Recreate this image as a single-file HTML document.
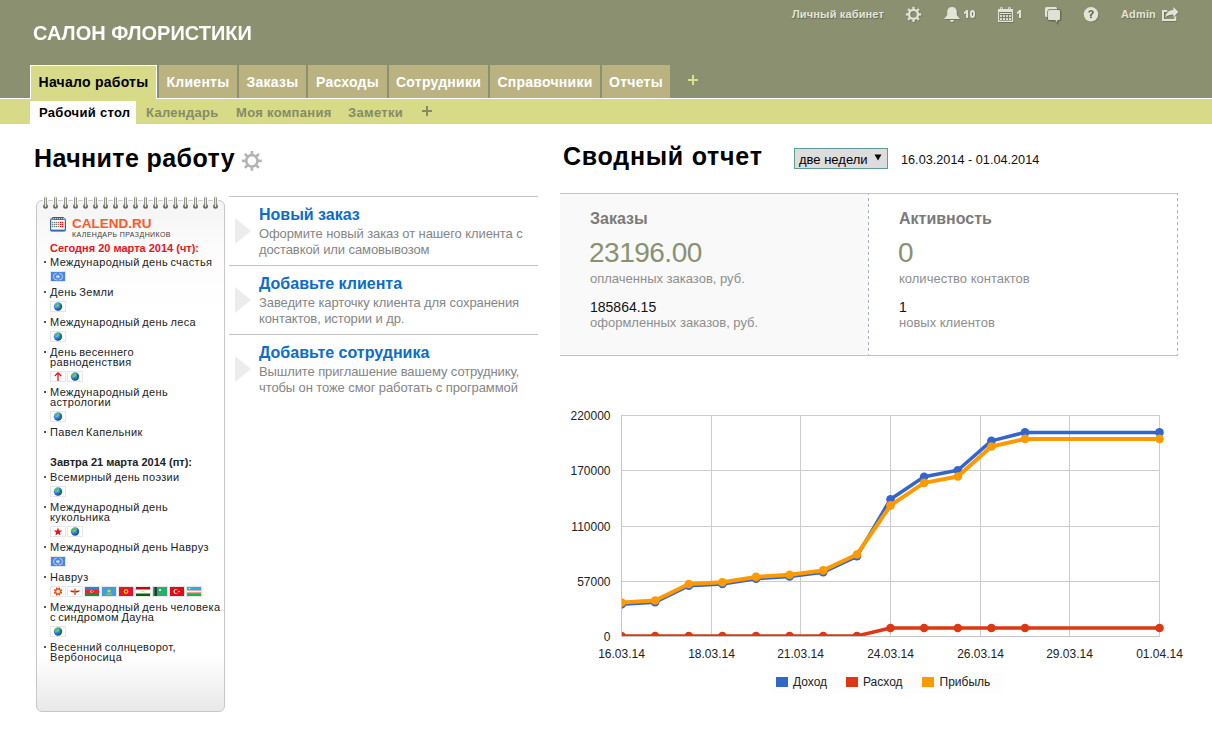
<!DOCTYPE html>
<html><head><meta charset="utf-8">
<style>
*{margin:0;padding:0;box-sizing:border-box}
html,body{width:1212px;height:738px;overflow:hidden;background:#fff;font-family:"Liberation Sans",sans-serif;position:relative}
.a{position:absolute;white-space:nowrap}
#hdr{position:absolute;left:0;top:0;width:1212px;height:99px;background:#8b9170}
#sub{position:absolute;left:0;top:99px;width:1212px;height:25px;background:#d7da87}
.tab{position:absolute;top:65px;height:33px;background:#bab381;color:#fff;font-weight:bold;font-size:14px;letter-spacing:0.25px;line-height:14px}
.tab span{position:absolute;top:10px;left:0;right:0;text-align:center}
.wline{position:absolute;left:0;top:98px;width:1212px;height:1px;background:#fff}
.tb{color:#e4e5d9;font-size:11px;font-weight:bold;line-height:11px;letter-spacing:0.15px;text-shadow:0.7px 0.7px 0.8px rgba(60,65,45,0.5)}
.sn{font-size:13px;font-weight:bold;line-height:13px;color:#858b6a;letter-spacing:0.3px;top:106px}
</style></head><body>
<div id="hdr"></div>
<div class="wline"></div>
<div id="sub"></div>
<div class="a" style="left:33px;top:22px;font-size:21px;line-height:21px;font-weight:bold;color:#fff;transform:scaleX(0.952);transform-origin:0 0">САЛОН ФЛОРИСТИКИ</div>

<!-- top bar -->
<div class="a tb" style="left:792px;top:9px">Личный кабинет</div>
<div class="a tb" style="left:1121px;top:9px">Admin</div>

<!-- tabs -->
<div class="tab" style="left:30px;width:127px;background:#d7da87;border:1px solid #fff;border-bottom:none;height:34px;color:#000"><span style="top:9px">Начало работы</span></div>
<div class="tab" style="left:159px;width:78px"><span>Клиенты</span></div>
<div class="tab" style="left:239px;width:67px"><span>Заказы</span></div>
<div class="tab" style="left:308px;width:79px"><span>Расходы</span></div>
<div class="tab" style="left:389px;width:99px"><span>Сотрудники</span></div>
<div class="tab" style="left:490px;width:110px"><span>Справочники</span></div>
<div class="tab" style="left:602px;width:68px"><span>Отчеты</span></div>
<div class="a" style="left:688px;top:79px;width:10px;height:2px;background:#dde189"></div><div class="a" style="left:692px;top:75px;width:2px;height:10px;background:#dde189"></div>

<!-- subnav -->
<div class="a" style="left:30px;top:101px;width:106px;height:23px;background:#fff"></div>
<div class="a sn" style="left:39px;color:#000">Рабочий стол</div>
<div class="a sn" style="left:146px">Календарь</div>
<div class="a sn" style="left:236px">Моя компания</div>
<div class="a sn" style="left:348px">Заметки</div>
<div class="a" style="left:422px;top:110px;width:10px;height:2px;background:#858b6a"></div><div class="a" style="left:426px;top:106px;width:2px;height:10px;background:#858b6a"></div>

<!-- headings -->
<div class="a" style="left:34px;top:146px;font-size:25px;line-height:25px;font-weight:bold;color:#000;letter-spacing:0.4px">Начните работу</div>
<div class="a" style="left:563px;top:144px;font-size:25px;line-height:25px;font-weight:bold;color:#000;letter-spacing:0.75px">Сводный отчет</div>


<!-- top bar icons -->
<svg class="a" style="left:0;top:0" width="1212" height="30" viewBox="0 0 1212 30">
 <defs>
  <filter id="sh" x="-20%" y="-20%" width="150%" height="150%"><feDropShadow dx="0.7" dy="0.7" stdDeviation="0.4" flood-color="#4a4f38" flood-opacity="0.6"/></filter>
 </defs>
 <g fill="#e3e4d8" filter="url(#sh)">
  <!-- gear -->
  <g ><circle cx="913.5" cy="14.4" r="4.45" fill="none" stroke="#e3e4d8" stroke-width="2.30"/><line x1="918.30" y1="14.40" x2="921.10" y2="14.40" stroke="#e3e4d8" stroke-width="2.2"/><line x1="916.89" y1="17.79" x2="918.87" y2="19.77" stroke="#e3e4d8" stroke-width="2.2"/><line x1="913.50" y1="19.20" x2="913.50" y2="22.00" stroke="#e3e4d8" stroke-width="2.2"/><line x1="910.11" y1="17.79" x2="908.13" y2="19.77" stroke="#e3e4d8" stroke-width="2.2"/><line x1="908.70" y1="14.40" x2="905.90" y2="14.40" stroke="#e3e4d8" stroke-width="2.2"/><line x1="910.11" y1="11.01" x2="908.13" y2="9.03" stroke="#e3e4d8" stroke-width="2.2"/><line x1="913.50" y1="9.60" x2="913.50" y2="6.80" stroke="#e3e4d8" stroke-width="2.2"/><line x1="916.89" y1="11.01" x2="918.87" y2="9.03" stroke="#e3e4d8" stroke-width="2.2"/></g>
  <!-- digits -->
  <path d="M966,10H968.1V18H966V13C965.5,13.5 964.7,13.9 964,14V12.2C965,11.9 965.7,11 966,10Z"/>
  <ellipse cx="972.5" cy="14" rx="1.65" ry="3.05" fill="none" stroke="#e3e4d8" stroke-width="1.9"/>
  <path d="M1019,10H1021.1V18H1019V13C1018.5,13.5 1017.7,13.9 1017,14V12.2C1018,11.9 1018.7,11 1019,10Z"/>
  <!-- bell -->
  <path d="M952,6.9C949.2,6.9 947.3,8.8 947.3,11.5V15L944,18.9H960L956.7,15V11.5C956.7,8.8 954.8,6.9 952,6.9Z"/>
  <path d="M950,20.1H954C953.7,21.4 953,22.1 952,22.1C951,22.1 950.3,21.4 950,20.1Z"/>
  <!-- calendar -->
  <path fill-rule="evenodd" d="M998,9h15.1v12.9h-15.1z M999.1,12h12.8v8.8h-12.8z"/>
  <path fill-rule="evenodd" d="M1000.2,10v-1.8a1.3,1.3 0 0 1 2.6,0v1.8z M1001.1,9.6v-1.3a0.4,0.4 0 0 1 0.8,0v1.3z"/>
  <path fill-rule="evenodd" d="M1008.2,10v-1.8a1.3,1.3 0 0 1 2.6,0v1.8z M1009.1,9.6v-1.3a0.4,0.4 0 0 1 0.8,0v1.3z"/>
  <rect x="1000" y="13" width="11" height="1"/>
  <rect x="1000" y="15.1" width="2" height="1.8"/><rect x="1003" y="15.1" width="2" height="1.8"/><rect x="1006" y="15.1" width="2" height="1.8"/><rect x="1009" y="15.1" width="2" height="1.8"/>
  <rect x="1000" y="18.1" width="2" height="1.9"/><rect x="1003" y="18.1" width="2" height="1.9"/><rect x="1006" y="18.1" width="2" height="1.9"/><rect x="1009" y="18.1" width="2" height="1.9"/>
  <!-- chat -->
  <rect x="1045" y="7" width="12" height="10" rx="1.6"/>
  <path d="M1049.6,10h8.8c0.9,0 1.6,0.7 1.6,1.6v6.8c0,0.9 -0.7,1.6 -1.6,1.6h-1.2l0.1,2.7l-2,-2.7h-5.7c-0.9,0 -1.6,-0.7 -1.6,-1.6v-6.8c0,-0.9 0.7,-1.6 1.6,-1.6z" fill="#dfe1d6" stroke="#666c4e" stroke-width="1.3" paint-order="stroke"/>
  <!-- help -->
  <circle cx="1091" cy="14.3" r="7.2"/>
  <!-- share -->
  <path d="M1162,10H1167.2V12H1164V19H1174.2V17.4L1176.2,15.6V21H1162Z"/>
  <path d="M1173.4,6.9L1178.3,12.1L1173.4,17.2V14.4C1169.8,14.3 1167.6,15 1165.4,17.4C1166,13.2 1168.6,10.3 1173.4,10Z"/>
 </g>
 <g fill="#666c4e"><path d="M1088.3,12.5c0,-1.7 1.1,-2.6 2.7,-2.6c1.7,0 2.8,1 2.8,2.3c0,2 -2.2,2 -2.2,3.8h-1.8c0,-2.5 2.1,-2.4 2.1,-3.6c0,-0.6 -0.4,-1 -1,-1c-0.6,0 -1,0.4 -1,1.1z"/><rect x="1090" y="16.4" width="1.8" height="1.7"/></g>
</svg>

<!-- calendar widget -->
<div class="a" style="left:36px;top:200px;width:189px;height:512px;border:1px solid #c8c8c8;border-radius:6px;background:linear-gradient(#f4f4f4 0px,#fcfcfc 50px,#fff 110px,#fff 455px,#e8e8e8 511px)"></div>
<svg class="a" style="left:36px;top:194px" width="189" height="18">
 <defs>
  <linearGradient id="ring" x1="0" x2="1"><stop offset="0" stop-color="#6a6a62"/><stop offset="0.5" stop-color="#d8d8cc"/><stop offset="1" stop-color="#6a6a62"/></linearGradient>
 </defs>
 <g id="rings"><g transform="translate(9.5,0)"><rect x="-2.7" y="5.6" width="5.4" height="1.8" fill="#fcfcfc"/><ellipse cx="0" cy="12.4" rx="2.5" ry="2.3" fill="#666660"/><path d="M-1.4,4 L0,2 L1.4,4 V12.5 H-1.4z" fill="url(#ring)"/><rect x="-0.5" y="3.5" width="1" height="9.5" fill="#e4e4d8"/></g><g transform="translate(19.5,0)"><rect x="-2.7" y="5.6" width="5.4" height="1.8" fill="#fcfcfc"/><ellipse cx="0" cy="12.4" rx="2.5" ry="2.3" fill="#666660"/><path d="M-1.4,4 L0,2 L1.4,4 V12.5 H-1.4z" fill="url(#ring)"/><rect x="-0.5" y="3.5" width="1" height="9.5" fill="#e4e4d8"/></g><g transform="translate(29.5,0)"><rect x="-2.7" y="5.6" width="5.4" height="1.8" fill="#fcfcfc"/><ellipse cx="0" cy="12.4" rx="2.5" ry="2.3" fill="#666660"/><path d="M-1.4,4 L0,2 L1.4,4 V12.5 H-1.4z" fill="url(#ring)"/><rect x="-0.5" y="3.5" width="1" height="9.5" fill="#e4e4d8"/></g><g transform="translate(39.5,0)"><rect x="-2.7" y="5.6" width="5.4" height="1.8" fill="#fcfcfc"/><ellipse cx="0" cy="12.4" rx="2.5" ry="2.3" fill="#666660"/><path d="M-1.4,4 L0,2 L1.4,4 V12.5 H-1.4z" fill="url(#ring)"/><rect x="-0.5" y="3.5" width="1" height="9.5" fill="#e4e4d8"/></g><g transform="translate(49.5,0)"><rect x="-2.7" y="5.6" width="5.4" height="1.8" fill="#fcfcfc"/><ellipse cx="0" cy="12.4" rx="2.5" ry="2.3" fill="#666660"/><path d="M-1.4,4 L0,2 L1.4,4 V12.5 H-1.4z" fill="url(#ring)"/><rect x="-0.5" y="3.5" width="1" height="9.5" fill="#e4e4d8"/></g><g transform="translate(59.5,0)"><rect x="-2.7" y="5.6" width="5.4" height="1.8" fill="#fcfcfc"/><ellipse cx="0" cy="12.4" rx="2.5" ry="2.3" fill="#666660"/><path d="M-1.4,4 L0,2 L1.4,4 V12.5 H-1.4z" fill="url(#ring)"/><rect x="-0.5" y="3.5" width="1" height="9.5" fill="#e4e4d8"/></g><g transform="translate(69.5,0)"><rect x="-2.7" y="5.6" width="5.4" height="1.8" fill="#fcfcfc"/><ellipse cx="0" cy="12.4" rx="2.5" ry="2.3" fill="#666660"/><path d="M-1.4,4 L0,2 L1.4,4 V12.5 H-1.4z" fill="url(#ring)"/><rect x="-0.5" y="3.5" width="1" height="9.5" fill="#e4e4d8"/></g><g transform="translate(79.5,0)"><rect x="-2.7" y="5.6" width="5.4" height="1.8" fill="#fcfcfc"/><ellipse cx="0" cy="12.4" rx="2.5" ry="2.3" fill="#666660"/><path d="M-1.4,4 L0,2 L1.4,4 V12.5 H-1.4z" fill="url(#ring)"/><rect x="-0.5" y="3.5" width="1" height="9.5" fill="#e4e4d8"/></g><g transform="translate(89.5,0)"><rect x="-2.7" y="5.6" width="5.4" height="1.8" fill="#fcfcfc"/><ellipse cx="0" cy="12.4" rx="2.5" ry="2.3" fill="#666660"/><path d="M-1.4,4 L0,2 L1.4,4 V12.5 H-1.4z" fill="url(#ring)"/><rect x="-0.5" y="3.5" width="1" height="9.5" fill="#e4e4d8"/></g><g transform="translate(99.5,0)"><rect x="-2.7" y="5.6" width="5.4" height="1.8" fill="#fcfcfc"/><ellipse cx="0" cy="12.4" rx="2.5" ry="2.3" fill="#666660"/><path d="M-1.4,4 L0,2 L1.4,4 V12.5 H-1.4z" fill="url(#ring)"/><rect x="-0.5" y="3.5" width="1" height="9.5" fill="#e4e4d8"/></g><g transform="translate(109.5,0)"><rect x="-2.7" y="5.6" width="5.4" height="1.8" fill="#fcfcfc"/><ellipse cx="0" cy="12.4" rx="2.5" ry="2.3" fill="#666660"/><path d="M-1.4,4 L0,2 L1.4,4 V12.5 H-1.4z" fill="url(#ring)"/><rect x="-0.5" y="3.5" width="1" height="9.5" fill="#e4e4d8"/></g><g transform="translate(119.5,0)"><rect x="-2.7" y="5.6" width="5.4" height="1.8" fill="#fcfcfc"/><ellipse cx="0" cy="12.4" rx="2.5" ry="2.3" fill="#666660"/><path d="M-1.4,4 L0,2 L1.4,4 V12.5 H-1.4z" fill="url(#ring)"/><rect x="-0.5" y="3.5" width="1" height="9.5" fill="#e4e4d8"/></g><g transform="translate(129.5,0)"><rect x="-2.7" y="5.6" width="5.4" height="1.8" fill="#fcfcfc"/><ellipse cx="0" cy="12.4" rx="2.5" ry="2.3" fill="#666660"/><path d="M-1.4,4 L0,2 L1.4,4 V12.5 H-1.4z" fill="url(#ring)"/><rect x="-0.5" y="3.5" width="1" height="9.5" fill="#e4e4d8"/></g><g transform="translate(139.5,0)"><rect x="-2.7" y="5.6" width="5.4" height="1.8" fill="#fcfcfc"/><ellipse cx="0" cy="12.4" rx="2.5" ry="2.3" fill="#666660"/><path d="M-1.4,4 L0,2 L1.4,4 V12.5 H-1.4z" fill="url(#ring)"/><rect x="-0.5" y="3.5" width="1" height="9.5" fill="#e4e4d8"/></g><g transform="translate(149.5,0)"><rect x="-2.7" y="5.6" width="5.4" height="1.8" fill="#fcfcfc"/><ellipse cx="0" cy="12.4" rx="2.5" ry="2.3" fill="#666660"/><path d="M-1.4,4 L0,2 L1.4,4 V12.5 H-1.4z" fill="url(#ring)"/><rect x="-0.5" y="3.5" width="1" height="9.5" fill="#e4e4d8"/></g><g transform="translate(159.5,0)"><rect x="-2.7" y="5.6" width="5.4" height="1.8" fill="#fcfcfc"/><ellipse cx="0" cy="12.4" rx="2.5" ry="2.3" fill="#666660"/><path d="M-1.4,4 L0,2 L1.4,4 V12.5 H-1.4z" fill="url(#ring)"/><rect x="-0.5" y="3.5" width="1" height="9.5" fill="#e4e4d8"/></g><g transform="translate(169.5,0)"><rect x="-2.7" y="5.6" width="5.4" height="1.8" fill="#fcfcfc"/><ellipse cx="0" cy="12.4" rx="2.5" ry="2.3" fill="#666660"/><path d="M-1.4,4 L0,2 L1.4,4 V12.5 H-1.4z" fill="url(#ring)"/><rect x="-0.5" y="3.5" width="1" height="9.5" fill="#e4e4d8"/></g><g transform="translate(179.5,0)"><rect x="-2.7" y="5.6" width="5.4" height="1.8" fill="#fcfcfc"/><ellipse cx="0" cy="12.4" rx="2.5" ry="2.3" fill="#666660"/><path d="M-1.4,4 L0,2 L1.4,4 V12.5 H-1.4z" fill="url(#ring)"/><rect x="-0.5" y="3.5" width="1" height="9.5" fill="#e4e4d8"/></g></g>
</svg>

<style>
#cal{position:absolute;left:44px;top:243px;width:180px;font-size:11px;color:#222}
#cal .hd{font-weight:bold;height:14px;line-height:11px;padding-left:6px;letter-spacing:0}
#cal .ci{position:relative;padding-left:6px;padding-bottom:5px}
#cal .ci:before{content:"";position:absolute;left:0;top:4px;width:2px;height:2px;background:#555}
#cal .ct{line-height:10px;letter-spacing:0.35px;word-spacing:-1px}
#cal .icr{height:11px;margin-top:4px;font-size:0;line-height:0}
#cal .ib{display:inline-block;width:16px;height:11px;border:1px solid #e6e6e6;margin-right:1px;background:#fff}
#cal .ib svg{display:block}
</style>
<svg class="a" style="left:50px;top:217px" width="17" height="15" viewBox="0 0 17 15">
 <rect x="0.6" y="1.6" width="14.8" height="12.4" rx="1.6" fill="#fff" stroke="#3668a8" stroke-width="1.2"/>
 <rect x="1" y="12.6" width="14" height="1.6" fill="#3668a8"/>
 <rect x="2.2" y="0" width="11.6" height="2.9" fill="#4d5676"/>
 <rect x="2.8" y="1.1" width="1" height="1" fill="#e8eef8"/><rect x="4.8" y="1.1" width="1" height="1" fill="#e8eef8"/><rect x="6.8" y="1.1" width="1" height="1" fill="#e8eef8"/><rect x="8.8" y="1.1" width="1" height="1" fill="#e8eef8"/><rect x="10.8" y="1.1" width="1" height="1" fill="#e8eef8"/><rect x="12.8" y="1.1" width="1" height="1" fill="#e8eef8"/><rect x="1.8" y="4.800000000000001" width="1.4" height="1.3" fill="#7a7a7a"/><rect x="3.8" y="4.800000000000001" width="1.4" height="1.3" fill="#7a7a7a"/><rect x="5.7" y="4.800000000000001" width="1.4" height="1.3" fill="#7a7a7a"/><rect x="7.7" y="4.800000000000001" width="1.4" height="1.3" fill="#7a7a7a"/><rect x="9.8" y="4.800000000000001" width="1.4" height="1.3" fill="#ff0000"/><rect x="11.700000000000001" y="4.800000000000001" width="1.4" height="1.3" fill="#ff0000"/><rect x="1.8" y="6.800000000000001" width="1.4" height="1.3" fill="#7a7a7a"/><rect x="3.8" y="6.800000000000001" width="1.4" height="1.3" fill="#7a7a7a"/><rect x="5.7" y="6.800000000000001" width="1.4" height="1.3" fill="#7a7a7a"/><rect x="7.7" y="6.800000000000001" width="1.4" height="1.3" fill="#7a7a7a"/><rect x="9.8" y="6.800000000000001" width="1.4" height="1.3" fill="#ff0000"/><rect x="11.700000000000001" y="6.800000000000001" width="1.4" height="1.3" fill="#ff0000"/><rect x="1.8" y="8.9" width="1.4" height="1.3" fill="#7a7a7a"/><rect x="3.8" y="8.9" width="1.4" height="1.3" fill="#7a7a7a"/><rect x="5.7" y="8.9" width="1.4" height="1.3" fill="#7a7a7a"/><rect x="7.7" y="8.9" width="1.4" height="1.3" fill="#7a7a7a"/><rect x="9.8" y="8.9" width="1.4" height="1.3" fill="#ff0000"/><rect x="11.700000000000001" y="8.9" width="1.4" height="1.3" fill="#ff0000"/>
</svg>
<div class="a" style="left:72px;top:217px;font-size:13.5px;line-height:13px;font-weight:bold;color:#ff5a1f">CALEND.RU</div>
<div class="a" style="left:72px;top:231px;font-size:7px;line-height:7px;color:#3a3a3a;letter-spacing:0.4px">КАЛЕНДАРЬ ПРАЗДНИКОВ</div>
<div id="cal">
<div class="hd" style="color:#e8141c">Сегодня 20 марта 2014 (чт):</div>
<div class="ci"><div class="ct">Международный день счастья</div><div class="icr"><span class="ib un"><svg width="14" height="9"><rect width="14" height="9" fill="#4a86e0"/><path d="M5.6,1.2 A3.4,3.4 0 0 0 6.2,8 M8.4,1.2 A3.4,3.4 0 0 1 7.8,8" fill="none" stroke="#c8dcf8" stroke-width="0.9"/><circle cx="7" cy="4.6" r="1.9" fill="#9cc0f0"/><path d="M6.4,5.2 L7.8,3.4 L7.8,5.6z" fill="#fff"/><circle cx="5.6" cy="4.2" r="0.5" fill="#fff"/></svg></span></div></div><div class="ci"><div class="ct">День Земли</div><div class="icr"><span class="ib"><svg width="14" height="9"><defs><radialGradient id="gl" cx="0.35" cy="0.3" r="0.8"><stop offset="0" stop-color="#a8e0ff"/><stop offset="0.45" stop-color="#3a8ae8"/><stop offset="1" stop-color="#10308a"/></radialGradient></defs><circle cx="7" cy="4.5" r="4.2" fill="url(#gl)"/><path d="M3.6,3.2 Q4.5,1 7,0.8 Q7.6,2 6.6,3.2 Q5.8,4.2 4.2,4.4z" fill="#5cc020"/><path d="M9.2,2 Q11,3 11.1,5 Q10.5,6.5 9.2,6.6 Q8.6,4.8 9.2,2z" fill="#0a8a2a"/><path d="M6.2,5.6 Q7.2,5.4 7.4,6.8 Q6.8,7.6 6.2,7z" fill="#108a30"/></svg></span></div></div><div class="ci"><div class="ct">Международный день леса</div><div class="icr"><span class="ib"><svg width="14" height="9"><defs><radialGradient id="gl" cx="0.35" cy="0.3" r="0.8"><stop offset="0" stop-color="#a8e0ff"/><stop offset="0.45" stop-color="#3a8ae8"/><stop offset="1" stop-color="#10308a"/></radialGradient></defs><circle cx="7" cy="4.5" r="4.2" fill="url(#gl)"/><path d="M3.6,3.2 Q4.5,1 7,0.8 Q7.6,2 6.6,3.2 Q5.8,4.2 4.2,4.4z" fill="#5cc020"/><path d="M9.2,2 Q11,3 11.1,5 Q10.5,6.5 9.2,6.6 Q8.6,4.8 9.2,2z" fill="#0a8a2a"/><path d="M6.2,5.6 Q7.2,5.4 7.4,6.8 Q6.8,7.6 6.2,7z" fill="#108a30"/></svg></span></div></div><div class="ci"><div class="ct">День весеннего<br>равноденствия</div><div class="icr"><span class="ib"><svg width="14" height="9"><path d="M7,0.5 v8.5 M3.8,4 L7,0.8 L10.2,4" stroke="#e8141c" stroke-width="1.3" fill="none"/></svg></span><span class="ib"><svg width="14" height="9"><defs><radialGradient id="gl" cx="0.35" cy="0.3" r="0.8"><stop offset="0" stop-color="#a8e0ff"/><stop offset="0.45" stop-color="#3a8ae8"/><stop offset="1" stop-color="#10308a"/></radialGradient></defs><circle cx="7" cy="4.5" r="4.2" fill="url(#gl)"/><path d="M3.6,3.2 Q4.5,1 7,0.8 Q7.6,2 6.6,3.2 Q5.8,4.2 4.2,4.4z" fill="#5cc020"/><path d="M9.2,2 Q11,3 11.1,5 Q10.5,6.5 9.2,6.6 Q8.6,4.8 9.2,2z" fill="#0a8a2a"/><path d="M6.2,5.6 Q7.2,5.4 7.4,6.8 Q6.8,7.6 6.2,7z" fill="#108a30"/></svg></span></div></div><div class="ci"><div class="ct">Международный день<br>астрологии</div><div class="icr"><span class="ib"><svg width="14" height="9"><defs><radialGradient id="gl" cx="0.35" cy="0.3" r="0.8"><stop offset="0" stop-color="#a8e0ff"/><stop offset="0.45" stop-color="#3a8ae8"/><stop offset="1" stop-color="#10308a"/></radialGradient></defs><circle cx="7" cy="4.5" r="4.2" fill="url(#gl)"/><path d="M3.6,3.2 Q4.5,1 7,0.8 Q7.6,2 6.6,3.2 Q5.8,4.2 4.2,4.4z" fill="#5cc020"/><path d="M9.2,2 Q11,3 11.1,5 Q10.5,6.5 9.2,6.6 Q8.6,4.8 9.2,2z" fill="#0a8a2a"/><path d="M6.2,5.6 Q7.2,5.4 7.4,6.8 Q6.8,7.6 6.2,7z" fill="#108a30"/></svg></span></div></div><div class="ci"><div class="ct">Павел Капельник</div></div>
<div style="height:15px"></div>
<div class="hd" style="height:15px">Завтра 21 марта 2014 (пт):</div>
<div class="ci"><div class="ct">Всемирный день поэзии</div><div class="icr"><span class="ib"><svg width="14" height="9"><defs><radialGradient id="gl" cx="0.35" cy="0.3" r="0.8"><stop offset="0" stop-color="#a8e0ff"/><stop offset="0.45" stop-color="#3a8ae8"/><stop offset="1" stop-color="#10308a"/></radialGradient></defs><circle cx="7" cy="4.5" r="4.2" fill="url(#gl)"/><path d="M3.6,3.2 Q4.5,1 7,0.8 Q7.6,2 6.6,3.2 Q5.8,4.2 4.2,4.4z" fill="#5cc020"/><path d="M9.2,2 Q11,3 11.1,5 Q10.5,6.5 9.2,6.6 Q8.6,4.8 9.2,2z" fill="#0a8a2a"/><path d="M6.2,5.6 Q7.2,5.4 7.4,6.8 Q6.8,7.6 6.2,7z" fill="#108a30"/></svg></span></div></div><div class="ci"><div class="ct">Международный день<br>кукольника</div><div class="icr"><span class="ib"><svg width="14" height="9"><path d="M7,0.5 L8.1,3.4 L11.2,3.5 L8.8,5.4 L9.6,8.5 L7,6.8 L4.4,8.5 L5.2,5.4 L2.8,3.5 L5.9,3.4z" fill="#e8141c"/></svg></span><span class="ib"><svg width="14" height="9"><defs><radialGradient id="gl" cx="0.35" cy="0.3" r="0.8"><stop offset="0" stop-color="#a8e0ff"/><stop offset="0.45" stop-color="#3a8ae8"/><stop offset="1" stop-color="#10308a"/></radialGradient></defs><circle cx="7" cy="4.5" r="4.2" fill="url(#gl)"/><path d="M3.6,3.2 Q4.5,1 7,0.8 Q7.6,2 6.6,3.2 Q5.8,4.2 4.2,4.4z" fill="#5cc020"/><path d="M9.2,2 Q11,3 11.1,5 Q10.5,6.5 9.2,6.6 Q8.6,4.8 9.2,2z" fill="#0a8a2a"/><path d="M6.2,5.6 Q7.2,5.4 7.4,6.8 Q6.8,7.6 6.2,7z" fill="#108a30"/></svg></span></div></div><div class="ci"><div class="ct">Международный день Навруз</div><div class="icr"><span class="ib un"><svg width="14" height="9"><rect width="14" height="9" fill="#4a86e0"/><path d="M5.6,1.2 A3.4,3.4 0 0 0 6.2,8 M8.4,1.2 A3.4,3.4 0 0 1 7.8,8" fill="none" stroke="#c8dcf8" stroke-width="0.9"/><circle cx="7" cy="4.6" r="1.9" fill="#9cc0f0"/><path d="M6.4,5.2 L7.8,3.4 L7.8,5.6z" fill="#fff"/><circle cx="5.6" cy="4.2" r="0.5" fill="#fff"/></svg></span></div></div><div class="ci"><div class="ct">Навруз</div><div class="icr"><span class="ib"><svg width="14" height="9"><rect width="14" height="9" fill="#fff"/><circle cx="10.05" cy="5.76" r="0.9" fill="#e8200c"/><circle cx="8.26" cy="7.55" r="0.9" fill="#e8200c"/><circle cx="5.74" cy="7.55" r="0.9" fill="#e8200c"/><circle cx="3.95" cy="5.76" r="0.9" fill="#e8200c"/><circle cx="3.95" cy="3.24" r="0.9" fill="#e8200c"/><circle cx="5.74" cy="1.45" r="0.9" fill="#e8200c"/><circle cx="8.26" cy="1.45" r="0.9" fill="#e8200c"/><circle cx="10.05" cy="3.24" r="0.9" fill="#e8200c"/><circle cx="7" cy="4.5" r="2.4" fill="none" stroke="#ff5a10" stroke-width="1.3"/></svg></span><span class="ib"><svg width="14" height="9"><rect width="14" height="9" fill="#fff"/><path d="M1.5,3.8 Q4,3.2 7,4 Q10,3.2 12.5,3.8 Q11,5.6 7,5.2 Q3,5.6 1.5,3.8z" fill="#d22"/><path d="M3,4.6 Q7,5.8 11,4.6" stroke="#333" stroke-width="0.6" fill="none"/><path d="M6.2,2 h1.6 v6 h-1.6z" fill="#f06020"/><rect x="6.3" y="1.2" width="1.4" height="1.2" fill="#f8c020"/></svg></span><span class="ib"><svg width="14" height="9"><rect width="14" height="3" fill="#2e7fcc"/><rect y="3" width="14" height="3" fill="#e8262e"/><rect y="6" width="14" height="3" fill="#1e8a3a"/><circle cx="6.6" cy="4.5" r="1.3" fill="#fff"/><circle cx="7.1" cy="4.5" r="1" fill="#e8262e"/><circle cx="8.6" cy="4.5" r="0.5" fill="#fff"/></svg></span><span class="ib"><svg width="14" height="9"><rect width="14" height="9" fill="#3aa0e0"/><circle cx="7" cy="4" r="1.6" fill="#fcd116"/><path d="M4,6.8 q3,1.2 6,0" stroke="#fcd116" stroke-width="0.7" fill="none"/></svg></span><span class="ib"><svg width="14" height="9"><rect width="14" height="9" fill="#e8112d"/><circle cx="7" cy="4.5" r="2.3" fill="#ffef00"/><circle cx="7" cy="4.5" r="1.2" fill="#e8112d"/></svg></span><span class="ib"><svg width="14" height="9"><rect width="14" height="9" fill="#fff"/><rect width="14" height="2.5" fill="#c00"/><rect y="6.5" width="14" height="2.5" fill="#060"/><path d="M5.5,4.8 q1.5,-1.2 3,0" stroke="#f8c300" stroke-width="0.7" fill="none"/></svg></span><span class="ib"><svg width="14" height="9"><rect width="14" height="9" fill="#28ae66"/><rect x="1.5" width="2.5" height="9" fill="#333"/><circle cx="7" cy="3" r="1" fill="#fff"/></svg></span><span class="ib"><svg width="14" height="9"><rect width="14" height="9" fill="#e30a17"/><circle cx="5.8" cy="4.5" r="2.3" fill="#fff"/><circle cx="6.4" cy="4.5" r="1.8" fill="#e30a17"/><circle cx="9" cy="4.5" r="0.8" fill="#fff"/></svg></span><span class="ib"><svg width="14" height="9"><rect width="14" height="3" fill="#1eb3e0"/><rect y="3" width="14" height="0.6" fill="#ce1126"/><rect y="3.6" width="14" height="2" fill="#fff"/><rect y="5.6" width="14" height="0.6" fill="#ce1126"/><rect y="6.2" width="14" height="2.8" fill="#1eb53a"/><circle cx="2.5" cy="1.5" r="0.8" fill="#fff"/></svg></span></div></div><div class="ci"><div class="ct">Международный день человека<br>с синдромом Дауна</div><div class="icr"><span class="ib"><svg width="14" height="9"><defs><radialGradient id="gl" cx="0.35" cy="0.3" r="0.8"><stop offset="0" stop-color="#a8e0ff"/><stop offset="0.45" stop-color="#3a8ae8"/><stop offset="1" stop-color="#10308a"/></radialGradient></defs><circle cx="7" cy="4.5" r="4.2" fill="url(#gl)"/><path d="M3.6,3.2 Q4.5,1 7,0.8 Q7.6,2 6.6,3.2 Q5.8,4.2 4.2,4.4z" fill="#5cc020"/><path d="M9.2,2 Q11,3 11.1,5 Q10.5,6.5 9.2,6.6 Q8.6,4.8 9.2,2z" fill="#0a8a2a"/><path d="M6.2,5.6 Q7.2,5.4 7.4,6.8 Q6.8,7.6 6.2,7z" fill="#108a30"/></svg></span></div></div><div class="ci"><div class="ct">Весенний солнцеворот,<br>Вербоносица</div></div>
</div>

<style>
.mi{position:absolute;left:229px;width:309px;height:69px;border-top:1px solid #c3c3c3}
.mi .tri{position:absolute;left:6px;top:21px;width:0;height:0;border-left:16px solid #ececec;border-top:13px solid transparent;border-bottom:13px solid transparent}
.mi .t{position:absolute;left:30px;top:10px;font-size:16px;line-height:16px;font-weight:bold;color:#0b6ccb;white-space:nowrap}
.mi .d{position:absolute;left:30px;top:29px;font-size:13px;line-height:16px;color:#858585;white-space:nowrap;letter-spacing:-0.1px}
</style>
<div class="mi" style="top:196px"><div class="tri"></div><div class="t">Новый заказ</div><div class="d">Оформите новый заказ от нашего клиента с<br>доставкой или самовывозом</div></div>
<div class="mi" style="top:265px"><div class="tri"></div><div class="t">Добавьте клиента</div><div class="d">Заведите карточку клиента для сохранения<br>контактов, истории и др.</div></div>
<div class="mi" style="top:334px;height:1px"></div>
<div class="mi" style="top:334px;border-top:1px solid #c3c3c3"><div class="tri"></div><div class="t">Добавьте сотрудника</div><div class="d">Вышлите приглашение вашему сотруднику,<br>чтобы он тоже смог работать с программой</div></div>
<svg class="a" style="left:238px;top:147px" width="28" height="28" viewBox="238 147 28 28"><g ><circle cx="251.85" cy="160.85" r="5.65" fill="none" stroke="#b4b4b4" stroke-width="2.70"/><line x1="258.05" y1="160.85" x2="261.75" y2="160.85" stroke="#b4b4b4" stroke-width="2.6"/><line x1="256.23" y1="165.23" x2="258.85" y2="167.85" stroke="#b4b4b4" stroke-width="2.6"/><line x1="251.85" y1="167.05" x2="251.85" y2="170.75" stroke="#b4b4b4" stroke-width="2.6"/><line x1="247.47" y1="165.23" x2="244.85" y2="167.85" stroke="#b4b4b4" stroke-width="2.6"/><line x1="245.65" y1="160.85" x2="241.95" y2="160.85" stroke="#b4b4b4" stroke-width="2.6"/><line x1="247.47" y1="156.47" x2="244.85" y2="153.85" stroke="#b4b4b4" stroke-width="2.6"/><line x1="251.85" y1="154.65" x2="251.85" y2="150.95" stroke="#b4b4b4" stroke-width="2.6"/><line x1="256.23" y1="156.47" x2="258.85" y2="153.85" stroke="#b4b4b4" stroke-width="2.6"/></g></svg>

<div class="a" style="left:794px;top:148px;width:94px;height:21px;border:1px solid #5f9b9b;background:#dddddd"></div>
<div class="a" style="left:799px;top:153px;font-size:13px;line-height:13px;color:#000">две недели</div>
<svg class="a" style="left:874px;top:154px" width="8" height="7"><path d="M0.5,0.5h7l-3.5,6z" fill="#000"/></svg>
<div class="a" style="left:901px;top:154px;font-size:12.7px;line-height:13px;color:#111">16.03.2014 - 01.04.2014</div>

<div class="a" style="left:560px;top:193px;width:618px;height:163px;border-top:1px solid #c4c4c4;border-bottom:1px solid #c2c2c2"></div>
<div class="a" style="left:560px;top:194px;width:308px;height:160px;background:#f9f9f9"></div>
<svg class="a" style="left:0;top:0" width="1212" height="360"><g stroke="#a6b2be" stroke-width="1" stroke-dasharray="3 3" stroke-dashoffset="2"><line x1="868.5" y1="194" x2="868.5" y2="355"/><line x1="1177.5" y1="194" x2="1177.5" y2="355"/></g></svg>
<style>
.sh{font-size:16px;line-height:16px;font-weight:bold;color:#7a7a7a}
.sb{font-size:28px;line-height:28px;color:#8a9170;letter-spacing:-0.5px}
.sl{font-size:13px;line-height:13px;color:#8e8e8e}
.sv{font-size:14px;line-height:14px;color:#111}
</style>
<div class="a sh" style="left:590px;top:211px">Заказы</div>
<div class="a sb" style="left:589px;top:239px">23196.00</div>
<div class="a sl" style="left:590px;top:272px">оплаченных заказов, руб.</div>
<div class="a sv" style="left:590px;top:300px">185864.15</div>
<div class="a sl" style="left:590px;top:316px">оформленных заказов, руб.</div>
<div class="a sh" style="left:899px;top:211px">Активность</div>
<div class="a sb" style="left:898px;top:239px">0</div>
<div class="a sl" style="left:899px;top:272px">количество контактов</div>
<div class="a sv" style="left:899px;top:300px">1</div>
<div class="a sl" style="left:899px;top:316px">новых клиентов</div>

<svg class="a" style="left:0;top:0" width="1212" height="738" viewBox="0 0 1212 738">
 <rect x="771" y="673" width="232" height="20" fill="#fdfdfd"/>
 <path d="M621,415.5H1160" stroke="#cccccc" stroke-width="1"/><path d="M621,470.5H1160" stroke="#cccccc" stroke-width="1"/><path d="M621,526.5H1160" stroke="#cccccc" stroke-width="1"/><path d="M621,581.5H1160" stroke="#cccccc" stroke-width="1"/><path d="M711.5,415V636" stroke="#cccccc" stroke-width="1"/><path d="M800.5,415V636" stroke="#cccccc" stroke-width="1"/><path d="M890.5,415V636" stroke="#cccccc" stroke-width="1"/><path d="M980.5,415V636" stroke="#cccccc" stroke-width="1"/><path d="M1069.5,415V636" stroke="#cccccc" stroke-width="1"/><path d="M1159.5,415V636" stroke="#cccccc" stroke-width="1"/><path d="M621.5,415V636.5H1160" stroke="#c4c4c4" stroke-width="1" fill="none"/>
 <g font-family="Liberation Sans" font-size="12" fill="#222"><text x="610.5" y="420" text-anchor="end">220000</text><text x="610.5" y="475" text-anchor="end">170000</text><text x="610.5" y="531" text-anchor="end">110000</text><text x="610.5" y="586" text-anchor="end">57000</text><text x="610.5" y="641" text-anchor="end">0</text><text x="621.5" y="658" text-anchor="middle">16.03.14</text><text x="711.5" y="658" text-anchor="middle">18.03.14</text><text x="800.5" y="658" text-anchor="middle">21.03.14</text><text x="890.5" y="658" text-anchor="middle">24.03.14</text><text x="980.5" y="658" text-anchor="middle">26.03.14</text><text x="1069.5" y="658" text-anchor="middle">29.03.14</text><text x="1159.5" y="658" text-anchor="middle">01.04.14</text></g>
 <defs><clipPath id="pc"><rect x="622" y="405" width="560" height="231"/></clipPath></defs>
 <g clip-path="url(#pc)">
  <polyline points="621.5,604.4 655.1,602.3 688.8,585.8 722.4,584.0 756.0,578.7 789.6,576.5 823.2,572.2 856.9,556.3 890.5,499.2 924.1,476.8 957.8,470.3 991.4,440.9 1025.0,432.4 1159.5,432.4" fill="none" stroke="#3366cc" stroke-width="3.5" stroke-linejoin="round"/>
  <circle cx="621.5" cy="604.4" r="4.3" fill="#3366cc"/><circle cx="655.1" cy="602.3" r="4.3" fill="#3366cc"/><circle cx="688.8" cy="585.8" r="4.3" fill="#3366cc"/><circle cx="722.4" cy="584.0" r="4.3" fill="#3366cc"/><circle cx="756.0" cy="578.7" r="4.3" fill="#3366cc"/><circle cx="789.6" cy="576.5" r="4.3" fill="#3366cc"/><circle cx="823.2" cy="572.2" r="4.3" fill="#3366cc"/><circle cx="856.9" cy="556.3" r="4.3" fill="#3366cc"/><circle cx="890.5" cy="499.2" r="4.3" fill="#3366cc"/><circle cx="924.1" cy="476.8" r="4.3" fill="#3366cc"/><circle cx="957.8" cy="470.3" r="4.3" fill="#3366cc"/><circle cx="991.4" cy="440.9" r="4.3" fill="#3366cc"/><circle cx="1025.0" cy="432.4" r="4.3" fill="#3366cc"/><circle cx="1159.5" cy="432.4" r="4.3" fill="#3366cc"/>
  <polyline points="621.5,636.0 655.1,636.0 688.8,636.0 722.4,636.0 756.0,636.0 789.6,636.0 823.2,636.0 856.9,636.0 890.5,628.0 924.1,628.0 957.8,628.0 991.4,628.0 1025.0,628.0 1159.5,628.0" fill="none" stroke="#dc3912" stroke-width="3.5" stroke-linejoin="round"/>
  <circle cx="621.5" cy="636.0" r="4.3" fill="#dc3912"/><circle cx="655.1" cy="636.0" r="4.3" fill="#dc3912"/><circle cx="688.8" cy="636.0" r="4.3" fill="#dc3912"/><circle cx="722.4" cy="636.0" r="4.3" fill="#dc3912"/><circle cx="756.0" cy="636.0" r="4.3" fill="#dc3912"/><circle cx="789.6" cy="636.0" r="4.3" fill="#dc3912"/><circle cx="823.2" cy="636.0" r="4.3" fill="#dc3912"/><circle cx="856.9" cy="636.0" r="4.3" fill="#dc3912"/><circle cx="890.5" cy="628.0" r="4.3" fill="#dc3912"/><circle cx="924.1" cy="628.0" r="4.3" fill="#dc3912"/><circle cx="957.8" cy="628.0" r="4.3" fill="#dc3912"/><circle cx="991.4" cy="628.0" r="4.3" fill="#dc3912"/><circle cx="1025.0" cy="628.0" r="4.3" fill="#dc3912"/><circle cx="1159.5" cy="628.0" r="4.3" fill="#dc3912"/>
  <polyline points="621.5,602.6 655.1,600.5 688.8,584.0 722.4,582.2 756.0,576.9 789.6,574.7 823.2,570.4 856.9,554.5 890.5,505.4 924.1,482.9 957.8,476.5 991.4,446.5 1025.0,438.9 1159.5,438.9" fill="none" stroke="#ff9900" stroke-width="4" stroke-linejoin="round"/>
  <circle cx="621.5" cy="602.6" r="4.3" fill="#ff9900"/><circle cx="655.1" cy="600.5" r="4.3" fill="#ff9900"/><circle cx="688.8" cy="584.0" r="4.3" fill="#ff9900"/><circle cx="722.4" cy="582.2" r="4.3" fill="#ff9900"/><circle cx="756.0" cy="576.9" r="4.3" fill="#ff9900"/><circle cx="789.6" cy="574.7" r="4.3" fill="#ff9900"/><circle cx="823.2" cy="570.4" r="4.3" fill="#ff9900"/><circle cx="856.9" cy="554.5" r="4.3" fill="#ff9900"/><circle cx="890.5" cy="505.4" r="4.3" fill="#ff9900"/><circle cx="924.1" cy="482.9" r="4.3" fill="#ff9900"/><circle cx="957.8" cy="476.5" r="4.3" fill="#ff9900"/><circle cx="991.4" cy="446.5" r="4.3" fill="#ff9900"/><circle cx="1025.0" cy="438.9" r="4.3" fill="#ff9900"/><circle cx="1159.5" cy="438.9" r="4.3" fill="#ff9900"/>
 </g>
 <g font-family="Liberation Sans" font-size="12" fill="#222">
  <rect x="776" y="677" width="12" height="10" fill="#3366cc"/><text x="793" y="686">Доход</text>
  <rect x="846" y="677" width="12" height="10" fill="#dc3912"/><text x="863" y="686">Расход</text>
  <rect x="922" y="677" width="12" height="10" fill="#ff9900"/><text x="939.5" y="686">Прибыль</text>
 </g>
</svg>
</body></html>
